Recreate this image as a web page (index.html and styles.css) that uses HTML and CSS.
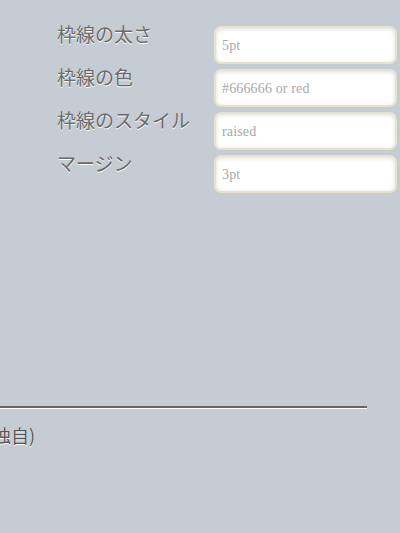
FILE: index.html
```html
<!DOCTYPE html>
<html lang="ja">
<head>
<meta charset="utf-8">
<link rel="stylesheet" href="styles.css">
</head>
<body>
<div class="form">
  <div class="row"><label class="label">枠線の太さ</label><input class="field" type="text" placeholder="5pt"></div>
  <div class="row"><label class="label">枠線の色</label><input class="field" type="text" placeholder="#666666 or red"></div>
  <div class="row"><label class="label">枠線のスタイル</label><input class="field" type="text" placeholder="raised"></div>
  <div class="row"><label class="label">マージン</label><input class="field" type="text" placeholder="3pt"></div>
</div>
<div class="rule"></div>
<div class="note">(独自)</div>
</body>
</html>
```
FILE: styles.css
```css
html, body {
  margin: 0;
  padding: 0;
  background: #c6ccd4;
  overflow: hidden;
}
body {
  width: 400px;
  height: 533px;
  font-family: "Noto Sans CJK JP", "Noto Sans", sans-serif;
}
.form {
  display: flex;
  flex-direction: column;
  gap: 5px;
  padding-top: 26px;
  padding-left: 57px;
}
.row {
  display: grid;
  grid-template-columns: 157px 183px;
  align-items: start;
}
.label {
  font-size: 19px;
  line-height: 20px;
  color: #6a6a6a;
  text-shadow: 0 1px 0 #fff;
  margin-top: -2px;
  white-space: nowrap;
}
.field {
  box-sizing: border-box;
  width: 183px;
  height: 38px;
  margin: 0;
  border: 2px solid #e6e2cc;
  border-radius: 7px;
  background: #fff;
  box-shadow: inset 0 1px 4px rgba(0,0,0,0.14);
  padding: 1px 0 0 6px;
  font-family: "Liberation Serif", serif;
  font-size: 14px;
  letter-spacing: 0.15px;
  color: #333;
  outline: none;
}
.field::placeholder {
  color: #a8a8a8;
}
.rule {
  margin-top: 213px;
  width: 367px;
  height: 2px;
  background: #666;
  border-bottom: 1px solid #fff;
}
.note {
  margin-top: 15px;
  margin-left: -13px;
  font-size: 18px;
  line-height: 22px;
  color: #555;
  text-shadow: 0 1px 0 #fff;
}
```
